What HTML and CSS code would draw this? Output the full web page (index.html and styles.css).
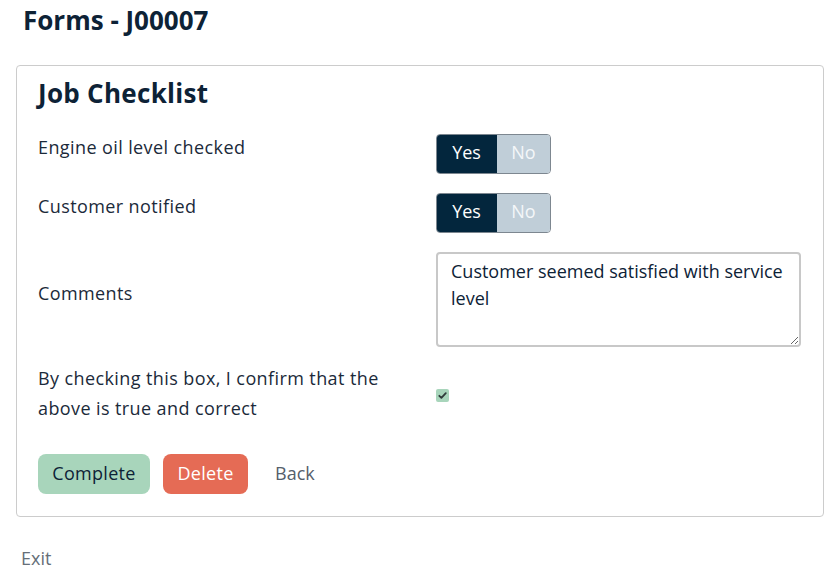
FILE: index.html
```html
<!DOCTYPE html>
<html lang="en">
<head>
<meta charset="utf-8">
<title>Forms - J00007</title>
<link rel="stylesheet" href="styles.css">
</head>
<body>
<h1 class="page-title">Forms - J00007</h1>
<section class="card">
  <h2 class="card-title">Job Checklist</h2>
  <div class="form-grid">
    <div class="row">
      <label class="field-label">Engine oil level checked</label>
      <div class="toggle"><span class="toggle-yes">Yes</span><span class="toggle-no">No</span></div>
    </div>
    <div class="row">
      <label class="field-label">Customer notified</label>
      <div class="toggle"><span class="toggle-yes">Yes</span><span class="toggle-no">No</span></div>
    </div>
    <div class="row">
      <label class="field-label">Comments</label>
      <textarea class="comments">Customer seemed satisfied with service level</textarea>
    </div>
    <div class="row row-confirm">
      <label class="field-label">By checking this box, I confirm that the above is true and correct</label>
      <span class="checkbox"><svg viewBox="0 0 13 13" width="13" height="13"><path d="M3.3 6.8 L5.4 8.9 L9.8 4.2" fill="none" stroke="#2f3a3a" stroke-width="1.8" stroke-linecap="round" stroke-linejoin="round"/></svg></span>
    </div>
  </div>
  <div class="actions">
    <button class="btn btn-complete">Complete</button>
    <button class="btn btn-delete">Delete</button>
    <a class="link-back">Back</a>
  </div>
</section>
<a class="exit">Exit</a>
</body>
</html>
```
FILE: styles.css
```css
* { box-sizing: border-box; }
body {
  margin: 0;
  padding: 0 10px 0 16px;
  font-family: "Open Sans", "Noto Sans", sans-serif;
  color: #1b2a3a;
  background: #fff;
}
.page-title {
  margin: 0;
  padding: 3px 0 0 7px;
  height: 65px;
  font-size: 26px;
  line-height: 34px;
  font-weight: 700;
  color: #0d2236;
}
.card {
  border: 1px solid #cccccc;
  border-radius: 4px;
  padding: 10px 21px 22px 21px;
  width: 808px;
}
.card-title {
  margin: 0 0 24px 0;
  font-size: 26px;
  font-weight: 700;
  letter-spacing: 0.3px;
  color: #0d2236;
  line-height: 34px;
}
.form-grid {
  display: flex;
  flex-direction: column;
  gap: 19px;
}
.row {
  display: grid;
  grid-template-columns: 398px 365px;
  align-items: center;
}
.field-label {
  font-size: 18px;
  letter-spacing: 0.4px;
  line-height: 26px;
  margin-bottom: 14px;
  color: #1b2a3a;
}
.row-confirm {
  margin-top: -3px;
}
.row-confirm .field-label {
  line-height: 30px;
  margin-bottom: 0;
  padding-right: 40px;
}
.toggle {
  display: flex;
  width: 115px;
  height: 40px;
  border: 1px solid #7d8790;
  border-radius: 4px;
  overflow: hidden;
  font-size: 18px;
}
.toggle-yes {
  width: 61px;
  background: #03263d;
  color: #fff;
  display: flex;
  align-items: center;
  justify-content: center;
  padding-bottom: 4px;
  margin: -1px 0 -1px -1px;
}
.toggle-no {
  flex: 1;
  background: #c0ced8;
  color: #f4f7f9;
  display: flex;
  align-items: center;
  justify-content: center;
  padding-bottom: 4px;
}
.comments {
  width: 365px;
  height: 95px;
  border: 2px solid #c8c8c8;
  border-radius: 4px;
  padding: 4px 13px;
  font-family: inherit;
  font-size: 18px;
  line-height: 27px;
  color: #0d2236;
  resize: both;
  display: block;
}
.checkbox {
  display: block;
  width: 13px;
  height: 13px;
  background: #a8d5bb;
  border-radius: 2px;
  margin-top: 5px;
}
.checkbox svg { display: block; }
.actions {
  display: flex;
  align-items: center;
  gap: 13px;
  margin-top: 31px;
}
.btn {
  height: 40px;
  border: none;
  border-radius: 8px;
  font-family: inherit;
  font-size: 18px;
  letter-spacing: 0.3px;
  padding: 0 10px 3px;
}
.btn-complete {
  width: 112px;
  background: #a8d5bb;
  color: #0d2236;
}
.btn-delete {
  width: 85px;
  background: #e56b55;
  color: #fff;
}
.link-back {
  margin-left: 14px;
  font-size: 18px;
  color: #55606b;
  padding-bottom: 3px;
}
.exit {
  display: block;
  margin: 29px 0 0 5px;
  font-size: 18px;
  line-height: 24px;
  color: #666f78;
}
```
